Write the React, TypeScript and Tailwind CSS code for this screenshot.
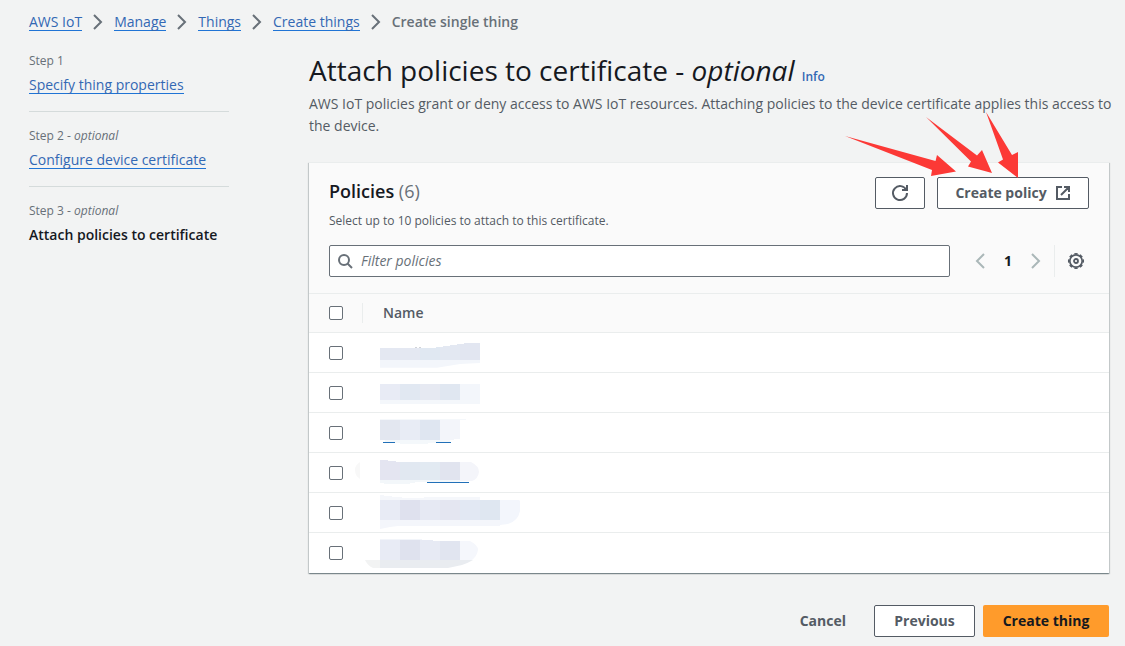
import { Fragment, type ReactNode } from "react";

const link =
  "border-b border-[#2074d5] leading-[17px] text-[#3368b4]";
const outlineButton =
  "flex h-8 items-center justify-center rounded-xs border border-[#545b64] bg-white font-bold text-[#545b64]";

function Icon({ children, className = "" }: { children: ReactNode; className?: string }) {
  return (
    <svg
      viewBox="0 0 16 16"
      className={`size-4 shrink-0 overflow-visible ${className}`}
      fill="none"
      stroke="currentColor"
      strokeWidth="2"
      aria-hidden="true"
    >
      {children}
    </svg>
  );
}

const crumbs = ["AWS IoT", "Manage", "Things", "Create things"];

function Breadcrumbs() {
  return (
    <nav aria-label="Breadcrumbs" className="flex h-11 items-center gap-2">
      {crumbs.map((crumb) => (
        <Fragment key={crumb}>
          <a href="#" className={link}>
            {crumb}
          </a>
          <Icon className="text-[#687078]">
            <path d="m4 1 7 7-7 7" />
          </Icon>
        </Fragment>
      ))}
      <span className="font-semibold text-[#687078]">Create single thing</span>
    </nav>
  );
}

const steps = [
  { label: "Step 1", optional: false, title: "Specify thing properties" },
  { label: "Step 2", optional: true, title: "Configure device certificate" },
  { label: "Step 3", optional: true, title: "Attach policies to certificate" },
];

function Steps() {
  return (
    <ol className="w-[200px] shrink-0 divide-y divide-[#d5dbdb]">
      {steps.map((step, i) => (
        <li key={step.label} className="flex h-[75px] flex-col items-start pt-4">
          <span className="text-xs leading-4 text-[#687078]">
            {step.label}
            {step.optional && (
              <>
                {" "}
                - <i>optional</i>
              </>
            )}
          </span>
          {i < 2 ? (
            <a href="#" className={`mt-[7px] ${link}`}>
              {step.title}
            </a>
          ) : (
            <span className="mt-[7px] font-semibold leading-[17px] whitespace-nowrap text-[#16191f]">
              {step.title}
            </span>
          )}
        </li>
      ))}
    </ol>
  );
}

function Columns({ colors, y, height }: { colors: string[]; y: number; height: number }) {
  return (
    <>
      {colors.map((color, i) => (
        <rect key={i} x={i * 20} y={y} width="20" height={height} fill={color} />
      ))}
    </>
  );
}

const maskedNames: ReactNode[] = [
  <>
    <path d="M0 27H100V30L80 31L57 34.7H0Z" fill="#f3f6fb" />
    <path d="M0 15H40V27H0Z" fill="#e4e8f2" />
    <path d="M40 15H56V14H60V27H40Z" fill="#e0e8f2" />
    <path d="M60 14H63V13H70V12H77V11H80V27H60Z" fill="#e3e8f2" />
    <path d="M80 11H84V10H100V27H80Z" fill="#e2e6f1" />
    <path d="M35 14h2v1h-2zM39 14h2v1h-2z" fill="#d0d3d8" />
  </>,
  <>
    <Columns colors={["#e8ebf5", "#e1e8f2", "#e6e9f2", "#e0e7f1", "#f3f6fb"]} y={11} height={16} />
    <path d="M0 27H100V31H0Z" fill="#f4f7fb" />
  </>,
  <>
    <path d="M0 6H86V7H0Z" fill="#f5f8fb" />
    <Columns colors={["#e3e7f0", "#e8ecf5", "#dfe6f1"]} y={7} height={20} />
    <path d="M60 7H80V26H74V27H60Z" fill="#f3f5fa" />
    <path d="M5 27H70V29H60V30H48V31H20V30H8V29H5Z" fill="#f4f8fb" />
    <path d="M3 29h12v1H3zM56 29h15v1H56z" fill="#2170b8" />
  </>,
  <>
    <path d="M-20 9V26Q-25 23-25 17Q-25 12-20 9Z" fill="#f8f8f8" />
    <path d="M0 7H8V8H16V9H20V27H0Z" fill="#e4e5f1" />
    <path d="M20 9H40V27H20Z" fill="#e1e8f1" />
    <path d="M40 9H60V27H40Z" fill="#e2eaf2" />
    <path d="M60 9H80V27H60Z" fill="#e1e4ef" />
    <path d="M80 9H91Q99 13 99 19Q98 26 92 28H80Z" fill="#f4f5fa" />
    <path d="M0 27H80V29H35V30H30V31H4V30H0Z" fill="#f3f7fa" />
    <path d="M47 29h42v1H47z" fill="#2170b8" />
  </>,
  <>
    <path d="M0 2H4V3H12V4H22V5H44V4H100V7H0Z" fill="#f5f7fb" />
    <Columns colors={["#e8ebf5", "#dfe1ee", "#e6e9f3", "#e4e6f1", "#e2e8f3", "#dfe7f1"]} y={7} height={20} />
    <path d="M120 7H139L140 8V18Q138 28 128 31L120 32Z" fill="#f3f6fc" />
    <path d="M0 27H120V33H18L10 34L0 36Z" fill="#f4f6fb" />
  </>,
  <>
    <path d="M0 6H42V7H0Z" fill="#f2f5fa" />
    <Columns colors={["#e8ebf5", "#dfe2ee"]} y={7} height={20} />
    <path d="M40 7H53V8H60V27H40Z" fill="#e7eaf4" />
    <path d="M60 8H80V27H60Z" fill="#e1e5f0" />
    <path d="M80 8H90Q98 12 98 17Q97 23 92 27H80Z" fill="#f5f7fc" />
    <path d="M-15 27H0V35H-7Q-12 33-15 27Z" fill="#f2f3f3" />
    <path d="M0 27H93Q88 30 82 32L68 35H0Z" fill="#e9ecf0" />
  </>,
];

function Checkbox({ label }: { label: string }) {
  return (
    <input
      type="checkbox"
      aria-label={label}
      className="block size-[14px] appearance-none rounded-xs border border-[#687078] bg-white checked:bg-[#0972d3]"
    />
  );
}

function PolicyTable() {
  return (
    <table className="w-full table-fixed border-separate border-spacing-0 bg-white text-left">
      <thead className="bg-[#fafafa]">
        <tr className="h-[39px]">
          <th className="w-[54px] border-b border-[#eaeded] p-0 pl-5">
            <div className="flex h-5 items-center border-r border-[#eaeded]">
              <Checkbox label="Select all policies" />
            </div>
          </th>
          <th className="border-b border-[#eaeded] p-0 pl-5 font-semibold text-[#545b64]">Name</th>
        </tr>
      </thead>
      <tbody>
        {maskedNames.map((mask, i) => (
          <tr key={i} className="group h-10">
            <td className="border-b border-[#eaeded] p-0 pl-5 group-last:border-white">
              <Checkbox label={`Select policy ${i + 1}`} />
            </td>
            <td className="border-b border-[#eaeded] p-0 pl-[17px] group-last:border-white">
              <svg width="150" height="39" className="block overflow-visible" aria-hidden="true">
                {mask}
              </svg>
            </td>
          </tr>
        ))}
      </tbody>
    </table>
  );
}

function Arrows() {
  return (
    <svg
      width="200"
      height="70"
      viewBox="840 110 200 70"
      className="pointer-events-none absolute -top-[67px] right-[50px]"
      fill="#fc3936"
      aria-hidden="true"
    >
      <path d="M846 136L936.500 161L938 155L957 171.500L932 176L933 170Z" />
      <path d="M927 117L978 155.500L983 150L993 173L969 166.500L972 161.500Z" />
      <path d="M987 112L1013 155L1019 152V178L999 162.500L1004 159.500Z" />
    </svg>
  );
}

function PoliciesCard() {
  return (
    <section className="mt-[25px] border-t border-[#eaeded] bg-[#fafafa] shadow-[0_1px_1px_0_rgba(0,28,36,0.3),1px_1px_1px_0_rgba(0,28,36,0.15),-1px_1px_1px_0_rgba(0,28,36,0.15)]">
      <div className="border-b border-[#eaeded] px-5 pt-[14px] pb-4">
        <div className="flex items-start justify-between">
          <div>
            <h2 className="text-lg leading-7 font-semibold text-[#16191f]">
              Policies <span className="font-normal text-[#687078]">(6)</span>
            </h2>
            <p className="mt-2 text-xs leading-4 text-[#545b64]">
              Select up to 10 policies to attach to this certificate.
            </p>
          </div>
          <div className="flex gap-3">
            <button type="button" aria-label="Refresh" className={`${outlineButton} w-[50px]`}>
              <Icon>
                <path d="M10 5h5V0" />
                <path d="M15 8a7 7 0 1 1-.7-3" />
              </Icon>
            </button>
            <div className="relative">
              <button type="button" className={`${outlineButton} w-[152px] gap-2`}>
                Create policy
                <Icon>
                  <path d="M9 2h5v5M6 10l8-8M14 9v5H2V2h5" />
                </Icon>
              </button>
              <Arrows />
            </div>
          </div>
        </div>
        <div className="mt-4 flex items-center">
          <label className="flex h-8 flex-1 items-center gap-2 rounded-xs border border-[#687078] bg-white px-[7px] text-[#687078]">
            <Icon>
              <circle cx="7" cy="7" r="5" />
              <path d="m15 15-4.500-4.500" />
            </Icon>
            <input
              type="text"
              aria-label="Filter policies"
              placeholder="Filter policies"
              className="min-w-0 flex-1 bg-transparent outline-none placeholder:text-[#687078] placeholder:italic"
            />
          </label>
          <div className="ml-[22px] flex items-center text-[#aab7b8]">
            <button type="button" aria-label="Previous page">
              <Icon>
                <path d="M12 1 5 8l7 7" />
              </Icon>
            </button>
            <button type="button" className="w-10 font-bold text-[#16191f]">
              1
            </button>
            <button type="button" aria-label="Next page">
              <Icon>
                <path d="m4 1 7 7-7 7" />
              </Icon>
            </button>
          </div>
          <div className="ml-[10px] flex h-8 items-center border-l border-[#eaeded] pr-[5px] pl-[13px] text-[#545b64]">
            <button type="button" aria-label="Preferences">
              <Icon>
                <circle cx="8" cy="8" r="6.200" strokeWidth="1.700" />
                <circle cx="8" cy="8" r="7.300" strokeWidth="1.500" pathLength="80" strokeDasharray="6 4" strokeDashoffset="3" />
                <circle cx="8" cy="8" r="2" strokeWidth="1.800" />
              </Icon>
            </button>
          </div>
        </div>
      </div>
      <PolicyTable />
    </section>
  );
}

export default function App() {
  return (
    <div className="min-h-screen bg-[#f2f3f3] pr-4 pb-[9px] pl-[29px] font-['Open_Sans','Noto_Sans',sans-serif] text-sm text-[#545b64]">
      <Breadcrumbs />
      <div className="flex items-start gap-20">
        <div className="-mt-[7px]">
          <Steps />
        </div>
        <main className="min-w-0 flex-1 pt-2">
          <h1 className="text-[28px] leading-9 whitespace-nowrap text-[#16191f]">
            Attach policies to certificate - <i>optional</i>{" "}
            <a href="#" className="text-xs font-semibold text-[#3368b4]">
              Info
            </a>
          </h1>
          <p className="-mr-3 mt-[5px] leading-[22px]">
            AWS IoT policies grant or deny access to AWS IoT resources. Attaching policies to the
            device certificate applies this access to the device.
          </p>
          <PoliciesCard />
          <div className="mt-8 flex justify-end gap-2 font-bold">
            <button type="button" className="h-8 px-5 text-[#545b64]">
              Cancel
            </button>
            <button type="button" className={`${outlineButton} w-[101px]`}>
              Previous
            </button>
            <button type="button" className="h-8 w-[126px] rounded-xs bg-[#ff9b2b] text-[#16191f]">
              Create thing
            </button>
          </div>
        </main>
      </div>
    </div>
  );
}
